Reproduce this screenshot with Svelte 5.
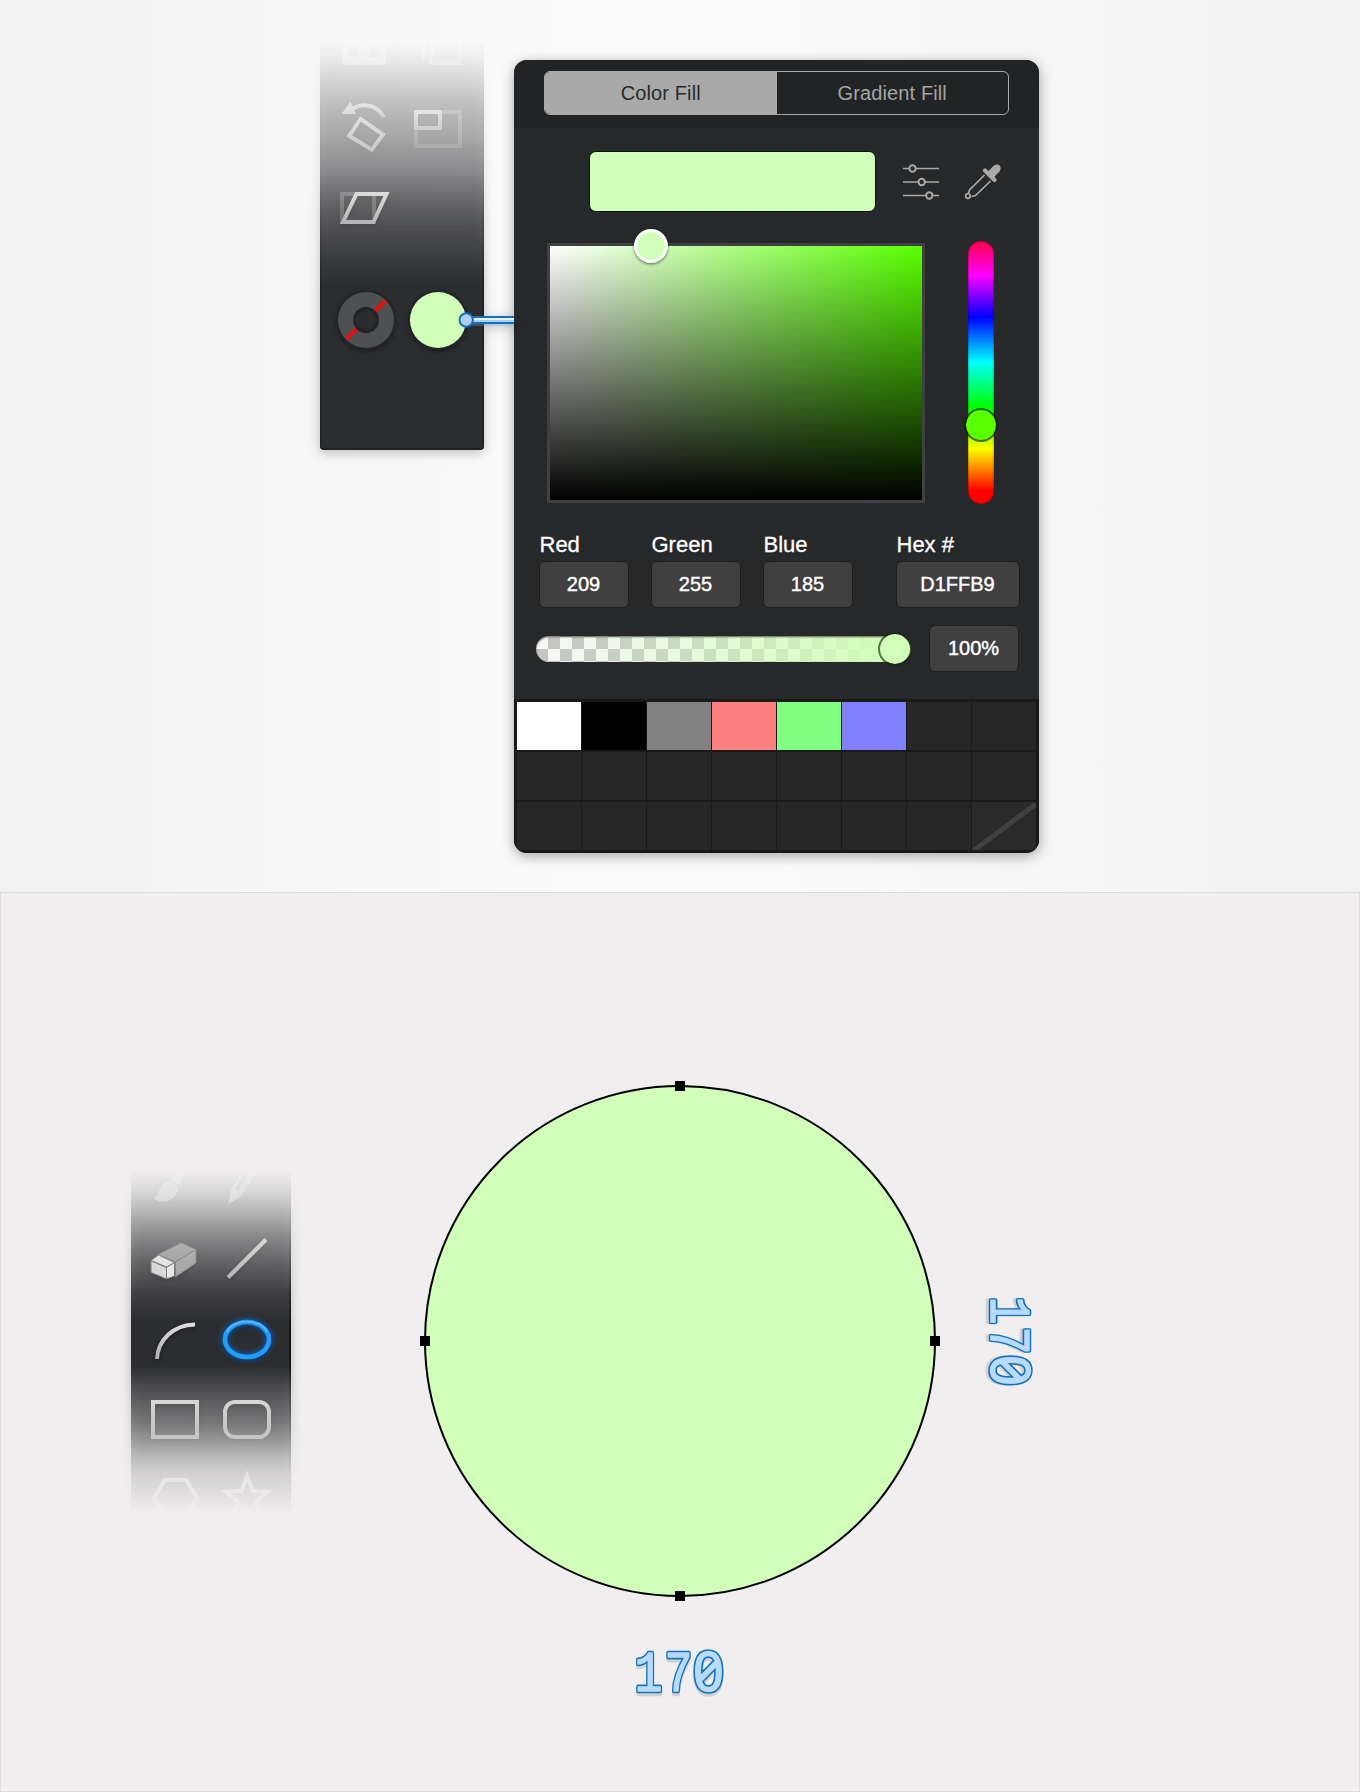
<script>
  const channels = [
    { label: 'Red', value: '209' },
    { label: 'Green', value: '255' },
    { label: 'Blue', value: '185' },
    { label: 'Hex #', value: 'D1FFB9', wide: true }
  ];
  const presets = ['white', 'black', 'gray', 'red', 'green', 'blue'];
  const swatches = Array.from({ length: 24 }, (_, i) => presets[i] ?? (i === 23 ? 'none' : 'empty'));
</script>

{#snippet digits(kind)}
  <g class="digits {kind}">
    <text class="slab" transform="translate(-45.500 19.500) scale(.82 1)">1</text>
    <text class="slab" transform="translate(-15.500 19.500) scale(.82 1)">7</text>
    <text class="zero" x="13" y="19.500">0</text>
  </g>
{/snippet}

<svg class="defs" width="0" height="0" aria-hidden="true">
  <defs>
    <linearGradient id="metal" x1="0" y1="0" x2="0" y2="1">
      <stop offset="0" stop-color="#dededf" />
      <stop offset="1" stop-color="#acacaf" />
    </linearGradient>
  </defs>
</svg>

<main>
  <section class="top">
    <div class="toolbar-shadow">
      <div class="toolbar transform-tools">
        <svg viewBox="330 40 72 48"><path class="solid faint" fill-rule="evenodd" d="M342 40h44v25h-44zM347 52a6 5 0 1 0 12 0a6 5 0 1 0-12 0M367 57l6-10 6 10z" /></svg>
        <svg viewBox="402 40 72 48"><path class="line faint" d="M424 40v20M431 40v23h29V40" /></svg>
        <svg viewBox="330 88 72 80">
          <path class="line soft" d="M360.500 119 383 134.500 371.800 149.600 349.200 135.800z" />
          <path class="line soft" d="M353 108.500C363 103 376 104 384 117" />
          <path class="solid soft" d="M341.500 114 350.500 101.500 356 114z" />
        </svg>
        <svg viewBox="402 88 72 80">
          <path class="line dim" d="M416 112h44v34h-44z" />
          <path class="line soft" d="M416 112h24v16h-24z" />
        </svg>
        <svg viewBox="330 168 72 80">
          <path class="line dim" d="M342 194h32v28h-32z" />
          <path class="line" d="M356.500 194h30L373.500 222H343z" />
        </svg>
        <i></i>
        <svg viewBox="330 280 72 80">
          <circle cx="366" cy="320" r="30" fill="#242527" />
          <circle cx="366" cy="320" r="28" fill="#4f5051" />
          <path d="M346.500 339 385.500 301" stroke="#e01212" stroke-width="4.500" />
          <circle cx="366" cy="320" r="13" fill="#222325" />
          <circle cx="366" cy="320" r="10" fill="#2a2b2d" />
        </svg>
        <svg viewBox="402 280 72 80">
          <circle cx="438" cy="320" r="30" fill="#222425" />
          <circle cx="438" cy="320" r="28" fill="#d1ffb9" />
        </svg>
      </div>
      <svg class="link" width="58" height="24" viewBox="456 308 58 24">
        <path d="M472 321h42" stroke="#80a0b0" stroke-opacity=".3" stroke-width="10" />
        <path d="M472 320h42" stroke="#1470b8" stroke-width="8" />
        <path d="M472 319h42" stroke="#e6f1ff" stroke-width="2" />
        <path d="M472 321h42" stroke="#adcdf5" stroke-width="2" />
        <circle cx="466.200" cy="320" r="6.700" fill="#adcdf5" stroke="#1470b8" stroke-width="2" />
      </svg>
    </div>

    <div class="panel">
      <header>
        <div class="tabs">
          <span class="tab active">Color Fill</span>
          <span class="tab">Gradient Fill</span>
        </div>
      </header>
      <div class="current">
        <div class="preview"></div>
        <svg class="adjust" width="38" height="38" viewBox="0 0 38 38">
          <path d="M1 5.500h36M1 19h36M1 32.500h36" />
          <circle cx="10.500" cy="5.500" r="3.200" /><circle cx="19.700" cy="19" r="3.200" /><circle cx="27.300" cy="32.500" r="3.200" />
        </svg>
        <svg class="picker" width="38" height="38" viewBox="0 0 38 38">
          <path d="M20.500 12 5.500 27 4.500 30.500M7.500 33.500 11.500 32.500 26.500 18" />
          <circle cx="4" cy="33" r="2.300" />
          <path class="bulb" d="M27 5.500C30 1.500 33.500 .5 35.500 2.500S37 8 33 11L30.500 13.500 32 15.500A2 2 0 0 1 29 18.500L19.500 9A2 2 0 0 1 22.500 6L24.500 8z" />
        </svg>
      </div>
      <div class="picking">
        <div class="field"><span class="field-knob"></span></div>
        <div class="hue"><span class="hue-knob"></span></div>
      </div>
      <div class="channels">
        {#each channels as c}
          <label class:wide={c.wide}>{c.label}<span class="box">{c.value}</span></label>
        {/each}
      </div>
      <div class="opacity">
        <div class="alpha"><span class="alpha-knob"></span></div>
        <span class="box">100%</span>
      </div>
      <div class="swatches">
        {#each swatches as s}
          <span class="swatch {s}">
            {#if s === 'none'}<svg viewBox="0 0 64 48"><path d="M1 49 64 2" /></svg>{/if}
          </span>
        {/each}
      </div>
    </div>
  </section>

  <section class="bottom">
    <div class="toolbar-shadow low">
      <div class="toolbar shape-tools">
        <svg viewBox="139 1168 72 52">
          <path class="solid faint" d="M153 1198C159 1197 158 1189 164 1183 170 1178 180 1184 177 1192 173 1203 160 1204 153 1198z" />
          <path class="solid faint" d="M170 1180 175 1168H185L179 1185z" />
        </svg>
        <svg viewBox="211 1168 72 52">
          <path class="solid faint" fill-rule="evenodd" d="M228.500 1204 230.500 1191 244 1168H259L241 1196zM235 1189 238 1191 251 1171 247 1169z" />
        </svg>
        <svg viewBox="139 1220 72 80">
          <g stroke="#606062" stroke-width="1" stroke-linejoin="round">
            <path fill="#8f8f91" d="M181 1243 196 1249.500 175.500 1262 158 1254.500z" />
            <path fill="#98989a" d="M196 1249.500V1263L175.500 1277V1262z" />
            <path fill="#f0f0f0" d="M151 1260.500 158.500 1255 174.500 1262.500 166.500 1267z" />
            <path fill="#dedee0" d="M151 1261 166.500 1267.500V1279L151 1272.500z" />
            <path fill="#f3f3f3" d="M166.500 1267.500 174.500 1262.500V1276L166.500 1279z" />
          </g>
        </svg>
        <svg viewBox="211 1220 72 80"><path class="line" d="M228 1277.500 266 1239.500" /></svg>
        <svg viewBox="139 1300 72 80"><path class="line" d="M157 1359C158 1340 173 1325 195 1324.500" /></svg>
        <svg viewBox="211 1300 72 80"><ellipse class="active-shape" cx="247" cy="1339.500" rx="22" ry="17.500" /><path class="gleam" d="M227 1332C233 1318 261 1318 267 1332" /></svg>
        <svg viewBox="139 1380 72 80"><rect class="line" x="153" y="1402" width="44" height="35" /></svg>
        <svg viewBox="211 1380 72 80"><rect class="line" x="225" y="1402" width="44" height="35" rx="10" /></svg>
        <svg viewBox="139 1460 72 56"><path class="line pale" d="M154 1498 165 1480H186L197 1498 186 1517H165z" /></svg>
        <svg viewBox="211 1460 72 56"><path class="line pale" d="M247 1476 252.500 1491 268 1492 256 1502 261 1518 247 1510 233 1518 238 1502 226 1492 241.500 1491z" /></svg>
      </div>
    </div>

    <svg class="canvas" width="640" height="660" viewBox="415 1076 640 660">
      <circle cx="680" cy="1341" r="255" fill="#d1ffb9" stroke="#000" stroke-width="2" />
      <path d="M675 1081h10v10h-10zM930 1336h10v10h-10zM675 1591h10v10h-10zM420 1336h10v10h-10z" />
      <g class="measure" transform="translate(680 1671.500)">
        {@render digits('edge')}{@render digits('face')}
      </g>
      <g class="measure" transform="translate(1011 1342) rotate(90)">
        {@render digits('edge')}{@render digits('face')}
      </g>
    </svg>
  </section>
</main>

<style>
  :global(body) { margin: 0; }
  main { width: 1360px; height: 1792px; font-family: "Liberation Sans", Arial, sans-serif; overflow: hidden; }
  section { box-sizing: border-box; display: flex; align-items: flex-start; }
  svg { display: block; }
  .defs { position: absolute; }
  .top {
    height: 892px; padding: 40px 0 0 320px; gap: 30px;
    background: linear-gradient(90deg, #f2f2f2, #f6f6f6 20%, #fafafa 36%, #fcfcfc 50%, #fafafa 64%, #f6f6f6 80%, #f2f2f2);
  }
  .toolbar-shadow { position: relative; filter: drop-shadow(0 3px 6px rgba(0, 0, 0, .24)); }
  .toolbar { box-sizing: border-box; display: grid; grid-template-columns: 72px 72px; background: #2c2d30; }
  .transform-tools {
    width: 164px; height: 410px; padding-left: 8px; border: solid #202124; border-width: 0 2px 2px; border-radius: 0 0 3px 3px;
    grid-template-rows: 48px 80px 80px 80px; align-content: start;
    -webkit-mask-image: linear-gradient(transparent, rgba(0,0,0,.07) 23px, rgba(0,0,0,.22) 60px, rgba(0,0,0,.35) 100px, rgba(0,0,0,.47) 130px, rgba(0,0,0,.65) 160px, rgba(0,0,0,.8) 190px, rgba(0,0,0,.89) 213px, #000 245px);
    mask-image: linear-gradient(transparent, rgba(0,0,0,.07) 23px, rgba(0,0,0,.22) 60px, rgba(0,0,0,.35) 100px, rgba(0,0,0,.47) 130px, rgba(0,0,0,.65) 160px, rgba(0,0,0,.8) 190px, rgba(0,0,0,.89) 213px, #000 245px);
  }
  .transform-tools svg:nth-last-child(-n+2) { margin-top: 32px; }
  .toolbar svg { width: 72px; height: auto; filter: drop-shadow(0 2px 2px rgba(0, 0, 0, .35)); }
  .line { fill: none; stroke: url(#metal); stroke-width: 4; }
  .solid { fill: #dcdcdf; }
  .soft { opacity: .88; }
  .dim { opacity: .3; }
  .faint { opacity: .72; }
  .pale { stroke: #dcdcdf; }
  .link { position: absolute; left: 136px; top: 268px; }

  .panel {
    width: 525px; height: 793px; margin-top: 20px; border-radius: 13px; overflow: hidden;
    background: #27282a; box-shadow: 0 3px 14px rgba(0, 0, 0, .35);
  }
  header { height: 68px; box-sizing: border-box; padding: 11px 30px 0; background: #222325; }
  .tabs { display: flex; box-sizing: border-box; width: 465px; height: 44px; border: 1.500px solid #a9a9a9; border-radius: 6px; overflow: hidden; }
  .tab { flex: 1; text-align: center; line-height: 43px; font-size: 20px; letter-spacing: .12px; color: #a4a4a4; }
  .tab.active { background: #a9a9a9; color: #29292b; }
  .current { display: flex; align-items: center; padding: 23px 0 0 74.500px; }
  .preview { box-sizing: border-box; width: 287px; height: 61px; border: 1.500px solid #071407; border-radius: 7px; background: #d1ffb9; }
  .adjust, .picker { fill: none; stroke: #a9a9a9; stroke-width: 1.700; }
  .adjust { margin: 1px 0 0 26.500px; }
  .adjust circle { fill: #27282a; stroke-width: 2; }
  .picker { margin-left: 24px; }
  .picker .bulb { fill: #a9a9a9; stroke: none; }
  .picking { display: flex; align-items: flex-start; padding: 31px 0 0 33px; }
  .field {
    position: relative; box-sizing: border-box; width: 378px; height: 260px; border: 3px solid #3f4042;
    background: linear-gradient(transparent, #000) padding-box, linear-gradient(90deg, #fff, #58ff00) padding-box;
  }
  .field-knob { position: absolute; box-sizing: border-box; left: 84px; top: -17px; width: 34px; height: 34px; border: 3.500px solid #fff; border-radius: 50%; background: #d1ffb9; box-shadow: 0 1px 3px rgba(0, 0, 0, .6); }
  .hue {
    position: relative; width: 26px; height: 263px; margin: -2px 0 0 43px; border-radius: 13px; box-shadow: inset 0 0 2px rgba(0, 0, 0, .7);
    background: linear-gradient(#ff0048, #ff00f2 12%, #f0f 13%, #00f 29%, #0ff 46%, #0f0 63%, #ff0 79%, #f00 95%);
  }
  .hue-knob { position: absolute; box-sizing: border-box; left: -4px; top: 167px; width: 34px; height: 34px; border: 2px solid rgba(10, 30, 5, .65); border-radius: 50%; background: #58ff00; background-clip: padding-box; }
  .channels { display: flex; gap: 22px; padding: 26px 0 0 24.500px; }
  label { width: 90px; font-size: 22px; line-height: 29px; color: #fff; text-indent: 1px; -webkit-text-stroke: .3px #fff; }
  label.wide { width: 124px; margin-left: 21px; }
  .box {
    display: block; box-sizing: border-box; height: 47px; border: 1px solid #1d1d1e; border-radius: 6px; background: #404041;
    color: #fff; font-size: 20px; line-height: 45px; text-align: center; text-indent: 0; -webkit-text-stroke: .4px #fff;
  }
  label .box { margin-top: 2px; }
  .opacity { display: flex; align-items: center; padding: 17px 0 0 22px; }
  .opacity .box { width: 90px; margin-left: 17.500px; }
  .alpha {
    position: relative; width: 375px; height: 26px; margin-top: 1px; border-radius: 13px; box-shadow: inset 0 1px 2px rgba(0, 0, 0, .6);
    background: linear-gradient(90deg, transparent, #d1ffb9 95%), repeating-conic-gradient(#c4c4c4 0 25%, #f7f7f7 0 50%) 0 1px / 24px 24px;
  }
  .alpha-knob { position: absolute; box-sizing: border-box; right: -1px; top: -4px; width: 34px; height: 34px; border: 2px solid rgba(20, 40, 10, .65); border-radius: 50%; background: #d1ffb9; background-clip: padding-box; }
  .swatches {
    display: grid; grid-template-columns: repeat(8, 64px); grid-auto-rows: 48px; gap: 2px 1px;
    margin-top: 27px; padding: 3px 3px 6px; background: #191919;
  }
  .swatch { background: #262626; }
  .swatch.white { background: #fff; }
  .swatch.black { background: #000; }
  .swatch.gray { background: #818181; }
  .swatch.red { background: #ff8080; }
  .swatch.green { background: #80ff80; }
  .swatch.blue { background: #8080ff; }
  .swatch.none { background: #2a2a2a; }
  .swatch path { stroke: #414141; stroke-width: 5; }

  .bottom { height: 900px; padding: 183px 0 0 130px; border: 1px solid #dedcdd; background: #f0eeef; }
  .low { margin-top: 92px; }
  .shape-tools {
    width: 160px; height: 348px; padding-left: 8px; border-right: 2px solid #151618;
    grid-template-rows: 52px 80px 80px 80px 56px;
    -webkit-mask-image: linear-gradient(transparent 2px, rgba(0,0,0,.1) 24px, rgba(0,0,0,.24) 43px, rgba(0,0,0,.38) 59px, rgba(0,0,0,.51) 75px, rgba(0,0,0,.76) 109px, rgba(0,0,0,.88) 125px, #000 152px, #000 198px, rgba(0,0,0,.84) 215px, rgba(0,0,0,.7) 232px, rgba(0,0,0,.54) 255px, rgba(0,0,0,.38) 272px, rgba(0,0,0,.22) 289px, rgba(0,0,0,.12) 305px, transparent 347px);
    mask-image: linear-gradient(transparent 2px, rgba(0,0,0,.1) 24px, rgba(0,0,0,.24) 43px, rgba(0,0,0,.38) 59px, rgba(0,0,0,.51) 75px, rgba(0,0,0,.76) 109px, rgba(0,0,0,.88) 125px, #000 152px, #000 198px, rgba(0,0,0,.84) 215px, rgba(0,0,0,.7) 232px, rgba(0,0,0,.54) 255px, rgba(0,0,0,.38) 272px, rgba(0,0,0,.22) 289px, rgba(0,0,0,.12) 305px, transparent 347px);
  }
  .active-shape { fill: none; stroke: #229dfa; stroke-width: 4.500; filter: drop-shadow(0 0 3px #0878ef); }
  .gleam { fill: none; stroke: #65bcff; stroke-width: 1.500; }
  .canvas { margin-left: 124px; }
  .measure { filter: drop-shadow(0 3px 0 rgba(0, 0, 0, .12)); }
  .digits { stroke-linejoin: round; }
  .slab { font: 57px "Liberation Mono", monospace; }
  .zero { font: 54px "Noto Sans", sans-serif; font-feature-settings: "zero" 1; }
  .edge text { fill: #1673b9; stroke: #1673b9; stroke-width: 4.600; }
  .face text { fill: #b9dbfb; stroke: #b9dbfb; stroke-width: 1.300; }
</style>
